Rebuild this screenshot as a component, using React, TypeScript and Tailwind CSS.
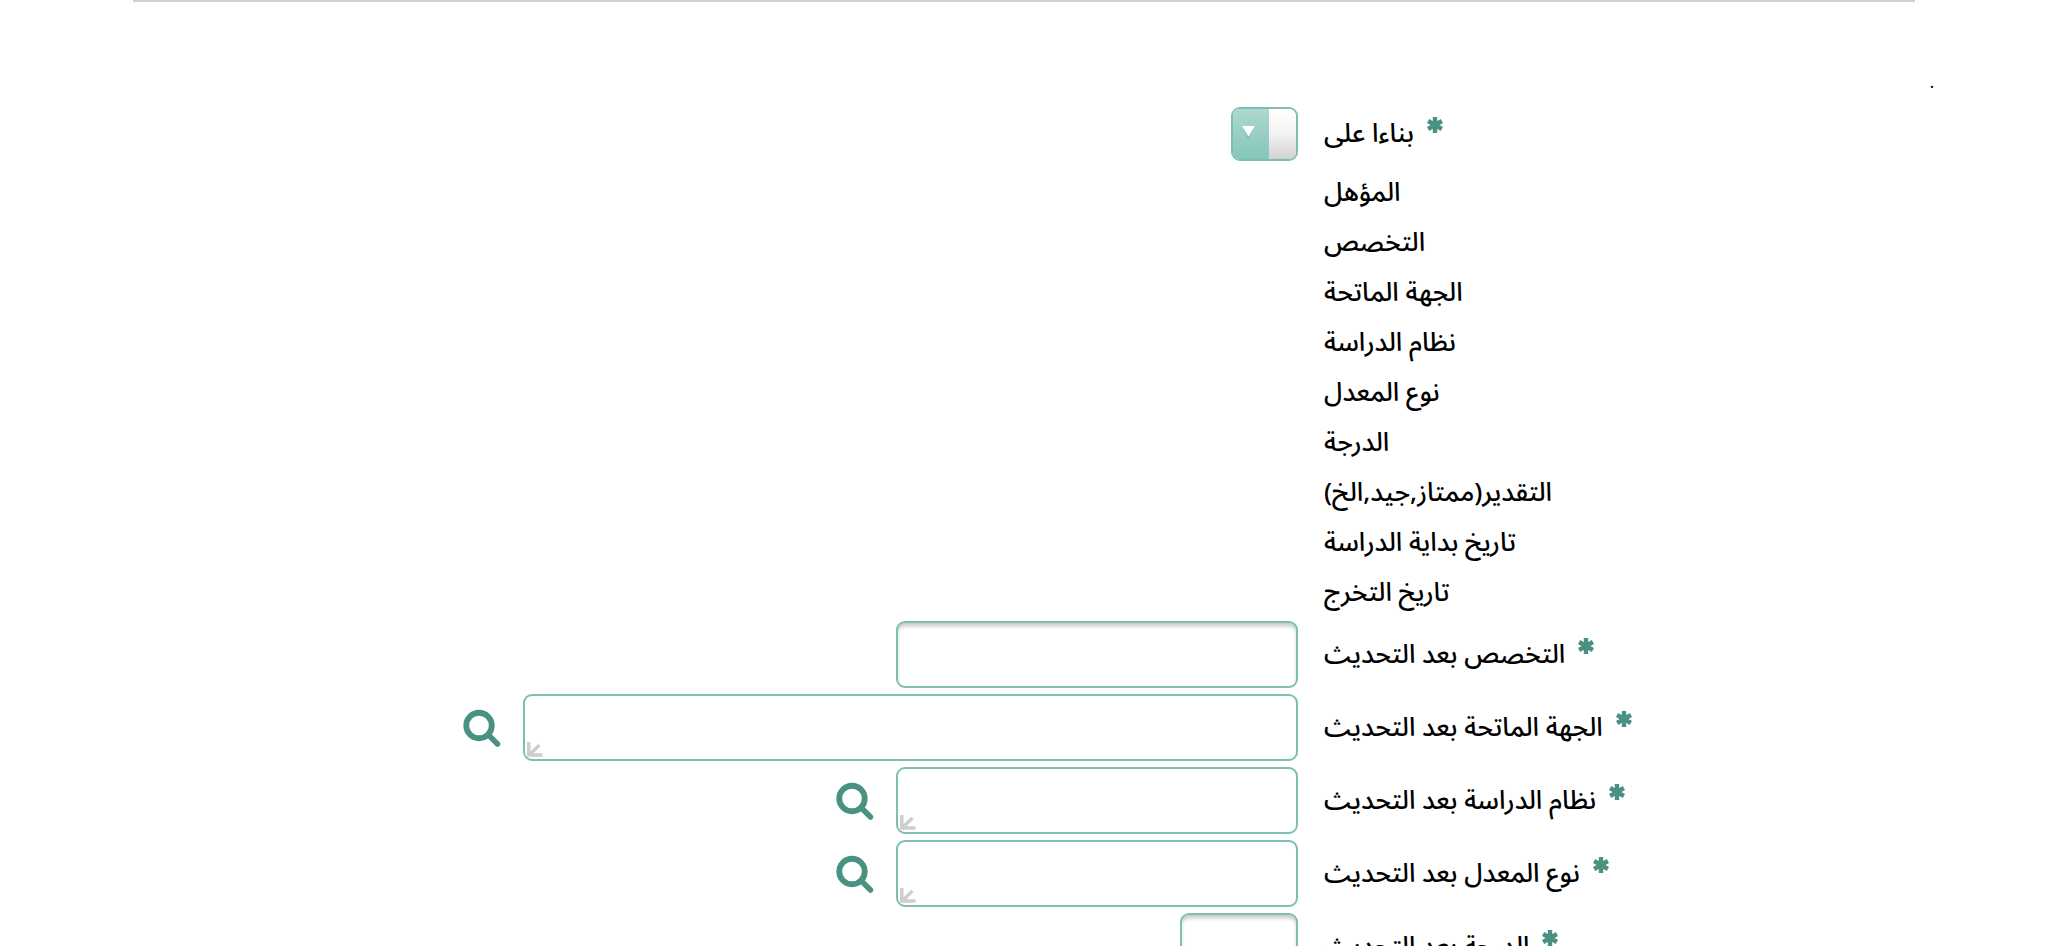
import { useId, type ReactNode } from 'react'

const infoLabels = [
  'المؤهل',
  'التخصص',
  'الجهة الماتحة',
  'نظام الدراسة',
  'نوع المعدل',
  'الدرجة',
  'التقدير(ممتاز,جيد,الخ)',
  'تاريخ بداية الدراسة',
  'تاريخ التخرج',
]

export default function App() {
  return (
    <main
      dir="rtl"
      lang="ar"
      className="h-screen overflow-hidden bg-white font-['Noto_Sans_Arabic','DejaVu_Sans',sans-serif] text-[26px] leading-8 font-medium text-black"
    >
      <hr className="mx-[133px] border-t-2 border-[#cfcfcf]" />
      <p className="mt-[65px] mb-2 px-[114px] text-[16px]">.</p>

      <form>
        <SelectRow label="بناءا على" />

        <dl className="mt-[7px] mb-[3px]">
          {infoLabels.map((label) => (
            <div key={label} className="grid h-[50px] grid-cols-[724fr_1298fr] items-center gap-x-[26px]">
              <dt className="text-end whitespace-nowrap">{label}</dt>
              <dd />
            </div>
          ))}
        </dl>

        <div className="flex flex-col gap-[6px]">
          <TextRow label="التخصص بعد التحديث" width="w-[402px]" />
          <LookupRow label="الجهة الماتحة بعد التحديث" width="w-[775px]" />
          <LookupRow label="نظام الدراسة بعد التحديث" width="w-[402px]" />
          <LookupRow label="نوع المعدل بعد التحديث" width="w-[402px]" />
          <TextRow label="الدرجة بعد التحديث" width="w-[118px]" />
        </div>
      </form>
    </main>
  )
}

function FieldRow({ id, label, children }: { id: string; label: string; children: ReactNode }) {
  return (
    <div className="grid grid-cols-[724fr_1298fr] items-center gap-x-[26px]">
      <label htmlFor={id} className="flex items-center justify-end gap-[13px] whitespace-nowrap">
        <RequiredMark />
        {label}
      </label>
      <div className="flex items-center gap-[22px]">{children}</div>
    </div>
  )
}

function SelectRow({ label }: { label: string }) {
  const id = useId()
  return (
    <FieldRow id={id} label={label}>
      <div className="relative h-[54px] w-[67px] overflow-hidden rounded-[9px] border-2 border-[#7dbfb2]">
        <select
          id={id}
          className="block h-full w-full appearance-none bg-linear-to-b from-white via-[#f3f3f3] to-[#d2d2d2] outline-none"
        >
          <option value="" />
        </select>
        <span className="pointer-events-none absolute inset-y-0 left-0 w-[36px] bg-linear-to-b from-[#add8cf] to-[#84c6ba]">
          <svg viewBox="0 0 36 50" className="h-full w-full" aria-hidden="true">
            <path d="M9.500 18H21.500L15.500 29.500Z" fill="#5fa295" />
            <path d="M9 17H22L15.500 28Z" fill="#fff" />
          </svg>
        </span>
      </div>
    </FieldRow>
  )
}

function TextRow({ label, width }: { label: string; width: string }) {
  const id = useId()
  return (
    <FieldRow id={id} label={label}>
      <input
        id={id}
        type="text"
        className={`${width} h-[67px] rounded-[9px] border-2 border-[#7dbfb2] px-3 shadow-[inset_0_4px_4px_-1px_#c4c8c8] outline-none`}
      />
    </FieldRow>
  )
}

function LookupRow({ label, width }: { label: string; width: string }) {
  const id = useId()
  return (
    <FieldRow id={id} label={label}>
      <div className={`${width} relative`}>
        <textarea
          id={id}
          rows={1}
          className="block h-[67px] w-full resize-none rounded-[9px] border-2 border-[#7dbfb2] px-3 py-4 outline-none"
        />
        <svg
          viewBox="0 0 16 16"
          className="pointer-events-none absolute bottom-1 left-1 size-4"
          fill="none"
          stroke="#cecece"
          strokeWidth="3.500"
          aria-hidden="true"
        >
          <path d="M1.750 1V14H15.500M2 14L12.500 4" />
        </svg>
      </div>
      <button type="button" aria-label={`بحث ${label}`}>
        <svg
          viewBox="0 0 38 38"
          className="size-[38px]"
          fill="none"
          stroke="#479281"
          strokeLinecap="round"
          aria-hidden="true"
        >
          <circle cx="16" cy="16.500" r="12.750" strokeWidth="5.800" />
          <path d="M26 26.500L34.500 35" strokeWidth="5.500" />
        </svg>
      </button>
    </FieldRow>
  )
}

function RequiredMark() {
  return (
    <svg
      viewBox="0 0 16 16"
      className="mb-[18px] size-4 shrink-0"
      stroke="#4b9182"
      strokeWidth="4.400"
      role="img"
      aria-label="مطلوب"
    >
      <path d="M8 0V16M1.100 4L14.900 12M14.900 4L1.100 12" />
    </svg>
  )
}
